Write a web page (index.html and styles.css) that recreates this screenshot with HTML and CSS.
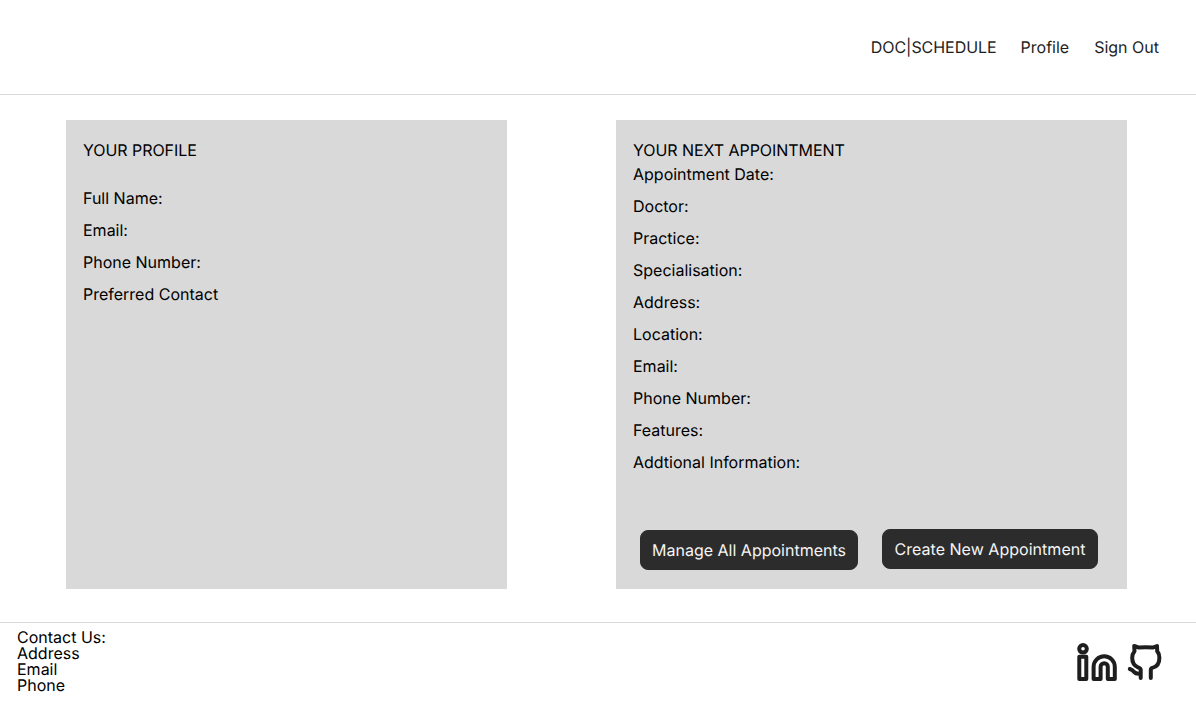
FILE: index.html
```html
<!DOCTYPE html>
<html lang="en">
<head>
<meta charset="utf-8">
<title>DOC|SCHEDULE</title>
<link rel="stylesheet" href="styles.css">
</head>
<body>
<header class="header">
  <nav class="nav"><a class="brand">DOC|SCHEDULE</a><a class="profile">Profile</a><a>Sign Out</a></nav>
</header>
<main class="main">
  <section class="card profile-card">
    <h2>YOUR PROFILE</h2>
    <ul class="fields"><li>Full Name:</li><li>Email:</li><li>Phone Number:</li><li>Preferred Contact</li></ul>
  </section>
  <section class="card appointment-card">
    <h2>YOUR NEXT APPOINTMENT</h2>
    <ul class="fields"><li>Appointment Date:</li><li>Doctor:</li><li>Practice:</li><li>Specialisation:</li><li>Address:</li><li>Location:</li><li>Email:</li><li>Phone Number:</li><li>Features:</li><li>Addtional Information:</li></ul>
    <div class="actions"><button class="btn manage">Manage All Appointments</button><button class="btn create">Create New Appointment</button></div>
  </section>
</main>
<footer class="footer">
  <address class="contact">Contact Us:<br>Address<br>Email<br>Phone</address>
  <div class="social">
    <svg class="linkedin" viewBox="0 0 40 38" fill="none" stroke="#1e1e1e" stroke-width="4" stroke-linejoin="round"><circle cx="6" cy="5.800" r="3.800"/><path d="M2.300 13.800h7V36h-7zM27.200 13.200A10.600 10.600 0 0 1 37.800 23.800V36h-7V23.800a3.600 3.600 0 0 0-7.200 0V36h-7V23.800A10.600 10.600 0 0 1 27.200 13.200z"/></svg>
    <svg class="github" viewBox="5 5 38 38" fill="none" stroke="#1e1e1e" stroke-width="4" stroke-linecap="round" stroke-linejoin="round"><path d="M18.700 40V31.800Q18.700 30.200 16 29.300C11.500 27.500 10.200 24 10.200 19.800C10.200 17 11 15 12.500 13.200L12.200 8L17 9.600Q23.800 8.800 30.700 9.600L35 8L35.200 13.200C36.800 15 37.400 17 37.400 19.800C37.400 25 35.200 29 30.300 29.900Q28.800 30.300 28.800 32V40M7.800 31Q10.500 31.800 12 33.900Q14 36.300 18.500 35.600"/></svg>
  </div>
</footer>
</body>
</html>
```
FILE: styles.css
```css
* { box-sizing: border-box; }
body { margin: 0; height: 701px; display: flex; flex-direction: column; background: #fff; color: #000; font: 16px/16px Inter, sans-serif; text-rendering: geometricPrecision; overflow: hidden; }
.header { height: 95px; border-bottom: 1px solid #d9d9d9; display: flex; justify-content: flex-end; align-items: center; padding-right: 37px; color: #1e1e1e; }
.nav { display: flex; gap: 25px; }
.brand { margin-right: -1px; letter-spacing: -.05px; }
.main { height: 527px; display: flex; padding: 25px 69px 0 66px; justify-content: space-between; }
.card { height: 469px; padding: 18px 17px; background: #d9d9d9; }
.profile-card { width: 441px; }
.appointment-card { width: 511px; }
h2 { margin: 0; font-size: 16px; font-weight: 400; line-height: 24px; letter-spacing: -.05px; }
.fields { margin: 0; padding: 0; list-style: none; line-height: 24px; display: flex; flex-direction: column; gap: 8px; }
.profile-card .fields { margin-top: 24px; }
.actions { display: flex; align-items: flex-start; gap: 24px; padding-left: 7px; margin-top: 55px; }
.btn { height: 40px; padding: 0; border: 1px solid #2c2c2c; border-radius: 8px; background: #2c2c2c; color: #f5f5f5; font: 16px/16px Inter, sans-serif; text-rendering: geometricPrecision; white-space: nowrap; }
.manage { width: 218px; margin-top: 1px; }
.create { width: 216px; letter-spacing: .03px; }
.footer { height: 79px; border-top: 1px solid #d9d9d9; display: flex; justify-content: space-between; padding: 6px 31px 0 17px; }
.contact { font-style: normal; }
.social { display: flex; align-items: flex-start; gap: 10px; padding-top: 14px; }
.linkedin { width: 40px; height: 38px; }
.github { width: 38px; height: 38px; }
```
